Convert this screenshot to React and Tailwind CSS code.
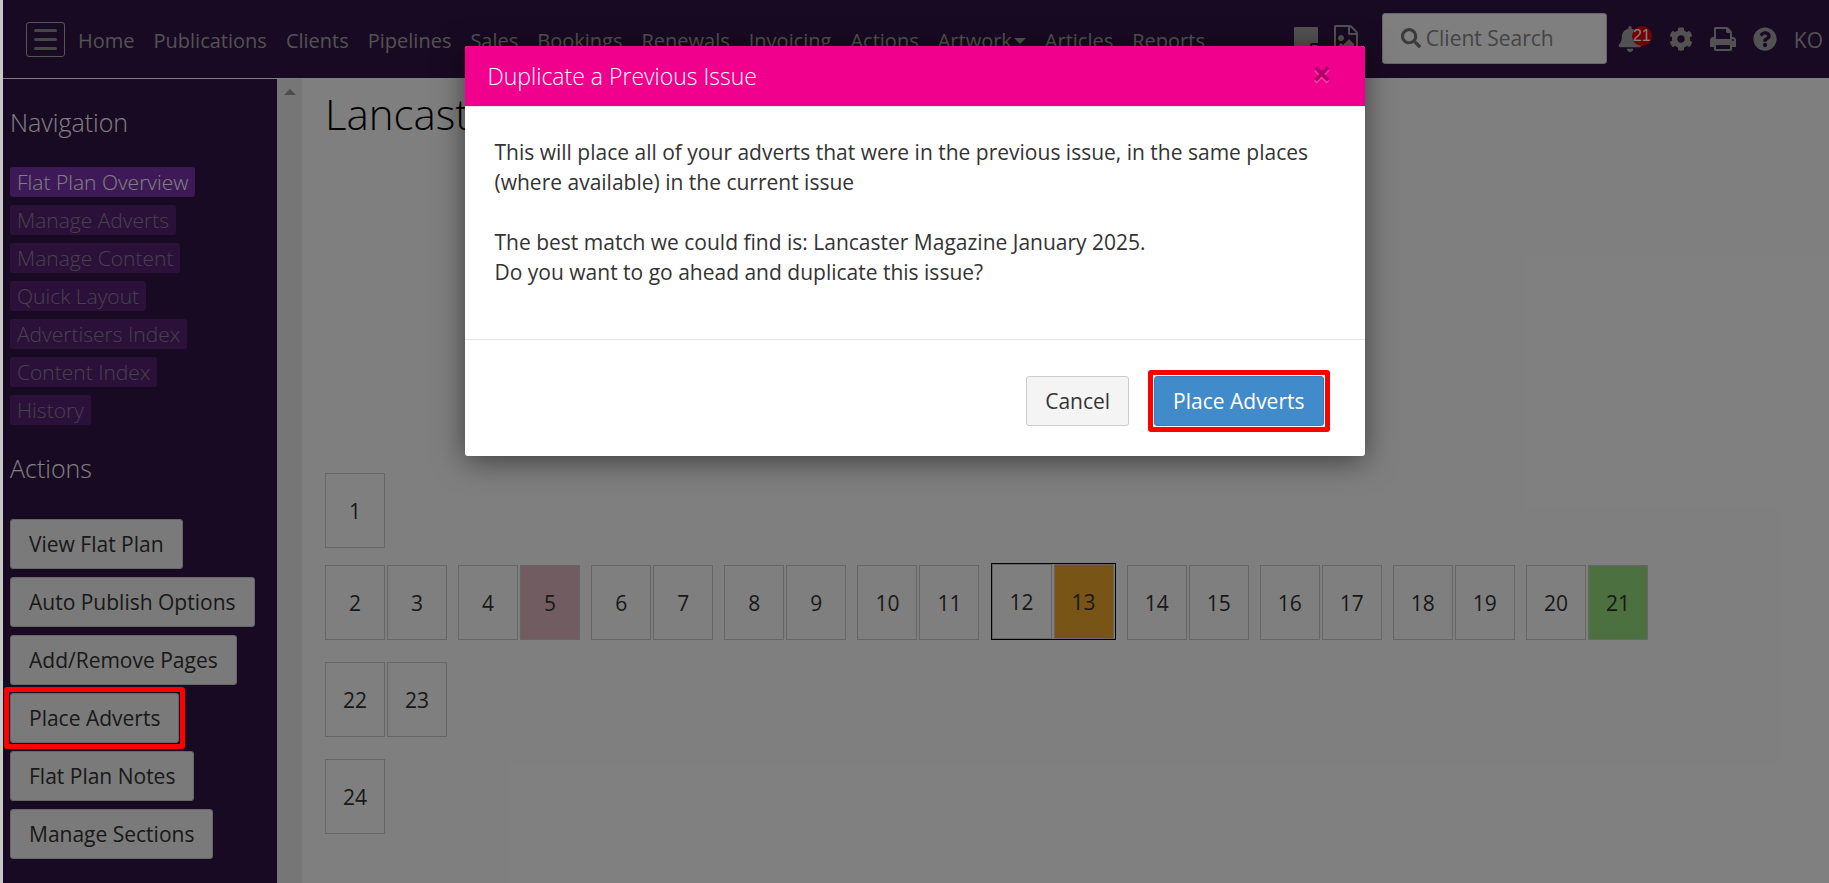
import React from 'react';
import { FaBell, FaCog, FaQuestionCircle, FaSearch } from 'react-icons/fa';

const navLinks = ['Home', 'Publications', 'Clients', 'Pipelines', 'Sales', 'Bookings', 'Renewals', 'Invoicing', 'Actions', 'Artwork', 'Articles', 'Reports'];

const sideLinks = ['Flat Plan Overview', 'Manage Adverts', 'Manage Content', 'Quick Layout', 'Advertisers Index', 'Content Index', 'History'];

const actions = ['View Flat Plan', 'Auto Publish Options', 'Add/Remove Pages', 'Place Adverts', 'Flat Plan Notes', 'Manage Sections'];

const spreads = [[2, 3], [4, 5], [6, 7], [8, 9], [10, 11], [12, 13], [14, 15], [16, 17], [18, 19], [20, 21]];

const pageColors = {
  5: 'bg-[#e2bac3]',
  13: 'bg-[#f0ab2d]',
  21: 'bg-[#98e080]'
};

const StickyNote = () => (
  <svg viewBox="0 0 24 24" className="size-6" fill="currentColor">
    <path d="M1 0h22a1 1 0 0 1 1 1v15h-6a2 2 0 0 0-2 2v6H1a1 1 0 0 1-1-1V1a1 1 0 0 1 1-1z" />
    <path d="M18 18h6l-6 6z" />
  </svg>
);

const FileImage = () => (
  <svg viewBox="0 0 1536 1792" className="h-7 w-6" fill="currentColor">
    <path d="M1468 380q28 28 48 76t20 88v1152q0 40-28 68t-68 28H96q-40 0-68-28t-28-68V96q0-40 28-68T96 0h896q40 0 88 20t76 48zM1024 136v376h376q-10-29-22-41l-313-313q-12-12-41-22zm384 1528V640H992q-40 0-68-28t-28-68V128H128v1536h1280zm-128-448v320H256v-192l192-192 128 128 384-384zM448 1024q-80 0-136-56t-56-136 56-136 136-56 136 56 56 136-56 136-136 56z" />
  </svg>
);

const Printer = () => (
  <svg viewBox="0 0 1664 1536" className="h-6 w-[26px]" fill="currentColor">
    <path d="M384 1408h896v-256H384v256zm0-640h896V384h-160q-40 0-68-28t-28-68V128H384v640zm1152 64q0-26-19-45t-45-19-45 19-19 45 19 45 45 19 45-19 19-45zm128 0v416q0 13-9.500 22.500t-22.500 9.500h-224v160q0 40-28 68t-68 28H352q-40 0-68-28t-28-68v-160H32q-13 0-22.500-9.500T0 1248V832q0-79 56.500-135.500T192 640h64V96q0-40 28-68t68-28h672q40 0 88 20t76 48l152 152q28 28 48 76t20 88v256h64q79 0 135.500 56.500T1664 832z" />
  </svg>
);

// red frame around the button the user should press
const Highlight = () => (
  <span className="pointer-events-none absolute -inset-[7px] z-10 rounded-[3px] border-[5px] border-[#f00]"></span>
);

const Page = ({ number }) => (
  <div className={`flex h-[75px] w-[60px] items-center justify-center border border-[#ccc] pt-0.5 ${pageColors[number] || ''}`}>
    {number}
  </div>
);

const Spread = ({ pages, current }) => (
  <div className={`flex gap-0.5 ${current ? 'border border-black pr-px' : ''}`}>
    {pages.map((n) => <Page key={n} number={n} />)}
  </div>
);

const Navbar = () => (
  <nav className="flex h-[79px] items-center border-b border-white bg-[#321446] pl-[23px] pr-1.5 text-[#a4a4a4]">
    <button type="button" aria-label="Menu" className="flex h-[35px] w-[39px] flex-col items-center justify-center gap-1.5 rounded-[3px] border border-[#aaa]">
      <span className="h-[3px] w-[23px] rounded-full bg-[#8c8c8c]"></span>
      <span className="h-[3px] w-[23px] rounded-full bg-[#8c8c8c]"></span>
      <span className="h-[3px] w-[23px] rounded-full bg-[#8c8c8c]"></span>
    </button>
    <div className="ml-[13px] flex gap-[19px] pt-1 text-xl">
      {navLinks.map((link) => (
        <a key={link} href="#" className="flex items-center whitespace-nowrap">
          {link}
          {link === 'Artwork' && <span className="ml-0.5 border-x-[6px] border-t-[6px] border-x-transparent border-t-[#a4a4a4]"></span>}
        </a>
      ))}
    </div>
    <div className="ml-auto flex items-center">
      <a href="#" aria-label="Notes"><StickyNote /></a>
      <a href="#" aria-label="Artwork files" className="ml-4"><FileImage /></a>
      <label className="mb-0.5 ml-6 flex h-[51px] w-[225px] items-center gap-[5px] rounded-[3px] border border-[#ccc] bg-white pl-[18px] text-[#777]">
        <FaSearch className="size-5 shrink-0" />
        <input type="text" aria-label="Client Search" placeholder="Client Search" className="w-full min-w-0 pt-0.5 outline-none placeholder:text-[#888]" />
      </label>
      <a href="#" aria-label="Notifications" className="relative ml-2.5">
        <FaBell className="size-[26px]" />
        <span className="absolute left-[15px] top-0 flex size-5 items-center justify-center rounded-full bg-red-600 font-['Liberation_Sans'] text-base text-white">21</span>
      </a>
      <a href="#" aria-label="Settings" className="ml-[26px]"><FaCog className="size-6" /></a>
      <a href="#" aria-label="Print" className="ml-[17px]"><Printer /></a>
      <a href="#" aria-label="Help" className="ml-[17px]"><FaQuestionCircle className="size-6" /></a>
      <a href="#" className="ml-[17px] pt-1">KO</a>
    </div>
  </nav>
);

const Sidebar = () => (
  <aside className="w-[274px] shrink-0 bg-[#321446] pl-[7px] pt-[27px]">
    <h4 className="text-[25px] font-light leading-8 text-white">Navigation</h4>
    <ul className="mt-[29px] flex flex-col items-start gap-2 font-light">
      {sideLinks.map((link, i) => (
        <li key={link}>
          <a href="#" className={`block rounded-[3px] px-[7px] leading-[30px] ${i === 0 ? 'bg-[#7c32b0] text-white' : 'bg-[#562374] text-[#8f8297]'}`}>{link}</a>
        </li>
      ))}
    </ul>
    <h4 className="mt-[27px] text-[25px] font-light leading-8 text-white">Actions</h4>
    <div className="mt-[35px] flex flex-col items-start gap-2">
      {actions.map((action) => (
        <button key={action} type="button" className="relative h-[50px] rounded-[3px] border border-[#ccc] bg-[#f4f4f4] px-[18px] pt-0.5">
          {action}
          {action === 'Place Adverts' && <Highlight />}
        </button>
      ))}
    </div>
  </aside>
);

const DuplicateModal = () => (
  <div className="absolute inset-x-0 top-[46px] flex justify-center">
    <div role="dialog" aria-labelledby="modal-title" className="w-[900px] overflow-hidden rounded-[3px] bg-white shadow-[0_5px_30px_rgba(0,0,0,0.5)]">
      <div className="flex h-[61px] items-center justify-between border-b border-[#e5e5e5] bg-[#f0008c] pl-[23px] pr-[33px]">
        <h4 id="modal-title" className="text-[23px] font-light text-white">Duplicate a Previous Issue</h4>
        <button type="button" aria-label="Close" className="pb-1.5 text-[34px] font-bold leading-10 text-black opacity-25 [text-shadow:0_2px_0_#fff]">×</button>
      </div>
      <div className="px-[30px] pb-[52px] pt-[30px] leading-[30px]">
        <p>This will place all of your adverts that were in the previous issue, in the same places (where available) in the current issue</p>
        <p className="mt-[30px]">The best match we could find is: Lancaster Magazine January 2025.<br />Do you want to go ahead and duplicate this issue?</p>
      </div>
      <div className="flex justify-end gap-[25px] border-t border-[#e5e5e5] pb-[30px] pr-[41px] pt-9">
        <button type="button" className="h-[50px] rounded-[3px] border border-[#ccc] bg-[#f4f4f4] px-[18px] pt-0.5">Cancel</button>
        <button type="button" className="relative h-[50px] rounded-[3px] border border-[#357ebd] bg-[#428bca] px-[18px] pt-0.5 text-white">
          Place Adverts
          <Highlight />
        </button>
      </div>
    </div>
  </div>
);

export default function App() {
  return (
    <div className="flex min-h-screen bg-[#c8c8c8] pl-[3px] font-['Open_Sans',sans-serif] text-[21px] text-[#333]">
      <div className="flex flex-1 flex-col bg-white">
        <Navbar />
        <div className="flex flex-1">
          <Sidebar />
          <div className="flex w-[25px] shrink-0 justify-center bg-[#ececec] pt-2.5">
            <span className="h-0 border-x-[6px] border-b-[6px] border-x-transparent border-b-[#9a9a9a]"></span>
          </div>
          <main className="flex-1 pl-[23px] pt-[3px]">
            <h1 className="text-[42px] font-light leading-[63px] text-black">Lancaster Magazine</h1>
            <div className="mt-[328px] flex w-[1323px] flex-col items-start">
              <Spread pages={[1]} />
              <div className="mt-[15px] flex w-full items-end justify-between">
                {spreads.map((pages) => <Spread key={pages[0]} pages={pages} current={pages[0] === 12} />)}
              </div>
              <div className="mt-[22px]"><Spread pages={[22, 23]} /></div>
              <div className="mt-[22px]"><Spread pages={[24]} /></div>
            </div>
          </main>
        </div>
      </div>
      <div className="absolute inset-y-0 left-[3px] right-0 bg-black/50"></div>
      <DuplicateModal />
    </div>
  );
}
